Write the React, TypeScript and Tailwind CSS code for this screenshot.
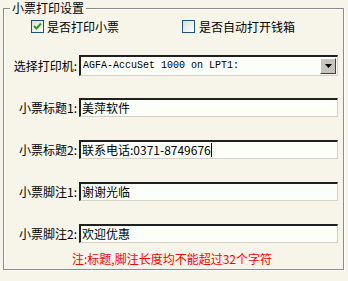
import React from "react";

const font = { fontFamily: '"Noto Sans CJK SC", "Liberation Sans", sans-serif' };

function Check({ checked }: { checked: boolean }) {
  return (
    <span className="relative inline-block w-[13px] h-[13px] border border-[#1c5180] bg-gradient-to-br from-[#dcdcd7] to-white shrink-0">
      {checked && (
        <svg className="absolute left-[1px] top-[1px]" width="9" height="9" viewBox="0 0 9 9">
          <path d="M1 4 L3.5 6.5 L8 1.5" stroke="#21a121" strokeWidth="2" fill="none" />
        </svg>
      )}
    </span>
  );
}

function Field({ label, value, cursor }: { label: string; value: string; cursor?: boolean }) {
  return (
    <div className="flex items-center h-[19px]">
      <div className="w-[74px] text-right text-[12px] leading-none text-black pr-[1px]">{label}</div>
      <div className="ml-[1px] w-[259px] h-[19px] border-t-2 border-l-2 border-t-[#202020] border-l-[#202020] border-r border-b border-r-[#d4d0c8] border-b-[#d4d0c8] bg-[#fcfff8] flex items-center pl-[1px] text-[12px] leading-none text-black">
        <span>{value}</span>
        {cursor && <span className="inline-block w-px h-[14px] bg-black" />}
      </div>
    </div>
  );
}

export default function App() {
  return (
    <div className="w-[348px] h-[281px] bg-[#f7f4e9] relative overflow-hidden" style={font}>
      <fieldset className="ml-[3px] w-[341px] h-[270px] border border-[#8c8c8c] shadow-[inset_1px_1px_0_#fff,1px_1px_0_#fff] px-0">
        <legend className="ml-[6px] px-[2px] text-[12px] leading-[16px] text-black">小票打印设置</legend>
        <div className="flex items-center mt-[4px] h-[13px] text-[12px] leading-none">
          <div className="ml-[27px] flex items-center w-[151px]">
            <Check checked />
            <span className="ml-[3px]">是否打印小票</span>
          </div>
          <div className="flex items-center">
            <Check checked={false} />
            <span className="ml-[4px]">是否自动打开钱箱</span>
          </div>
        </div>
        <div className="flex items-center mt-[22px] h-[21px]">
          <div className="w-[74px] text-right text-[12px] leading-none pr-[1px]">选择打印机:</div>
          <div className="ml-[1px] w-[259px] h-[21px] border-t-2 border-l-2 border-t-[#202020] border-l-[#202020] border-r border-b border-r-[#d4d0c8] border-b-[#d4d0c8] bg-[#fcfff8] flex items-center justify-between">
            <span className="pl-[2px] text-[10px] leading-none" style={{ fontFamily: '"Liberation Mono", monospace' }}>
              AGFA-AccuSet 1000 on LPT1:
            </span>
            <span className="w-[16px] h-[16px] mr-[1px] bg-[#c8c4bc] border-t border-l border-t-white border-l-white border-r border-b border-r-[#404040] border-b-[#404040] flex items-center justify-center">
              <svg width="7" height="4" viewBox="0 0 7 4">
                <path d="M0 0 H7 L3.5 4 Z" fill="#000" />
              </svg>
            </span>
          </div>
        </div>
        <div className="mt-[22px]">
          <Field label="小票标题1:" value="美萍软件" />
        </div>
        <div className="mt-[23px]">
          <Field label="小票标题2:" value="联系电话:0371-8749676" cursor />
        </div>
        <div className="mt-[23px]">
          <Field label="小票脚注1:" value="谢谢光临" />
        </div>
        <div className="mt-[23px]">
          <Field label="小票脚注2:" value="欢迎优惠" />
        </div>
        <div className="mt-[10px] text-center text-[12px] leading-none text-[#ff0000] pr-[3px]">
          注:标题,脚注长度均不能超过32个字符
        </div>
      </fieldset>
    </div>
  );
}
